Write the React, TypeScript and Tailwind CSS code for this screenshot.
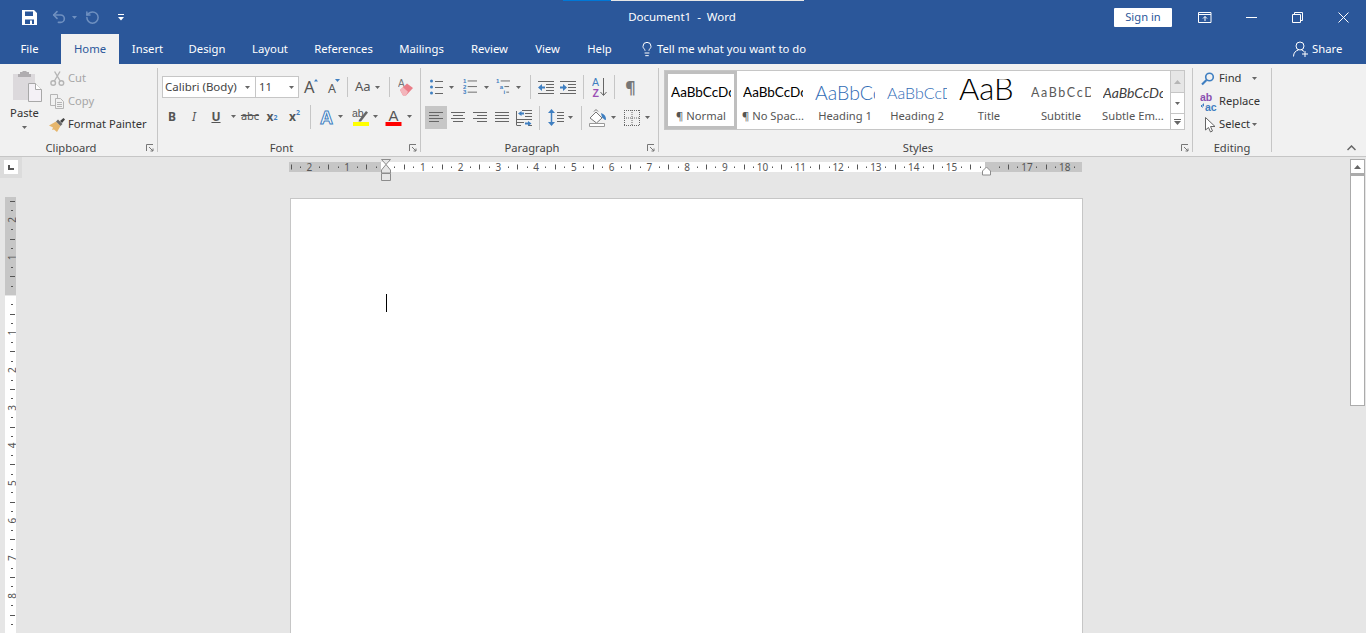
import React from "react";
import { Lightbulb, RotateCcw, Undo2 } from "lucide-react";

const Chev = ({ className = "", color = "#666" }: { className?: string; color?: string }) => (
  <svg width="5" height="3" viewBox="0 0 5 3" className={`shrink-0 ${className}`}>
    <path d="M0 0h5L2.5 3z" fill={color} />
  </svg>
);

const Sep = ({ className = "" }: { className?: string }) => <div className={`h-[24px] w-px shrink-0 bg-[#c6c6c6] ${className}`} />;

const Launcher = () => (
  <svg width="8" height="8" viewBox="0 0 8 8" fill="none" stroke="#777">
    <path d="M.5 7V.5H7" />
    <path d="M3 3l4 4M7 4.5V7H4.5" />
  </svg>
);

const Group = ({ w, label, launcher = true, className = "", children }: { w: string; label: string; launcher?: boolean; className?: string; children: React.ReactNode }) => (
  <div className={`flex shrink-0 ${w}`}>
    <div className="flex min-w-0 flex-1 flex-col">
      <div className={`min-h-0 flex-1 ${className}`}>{children}</div>
      <div className="flex h-[16px] items-center">
        <div className="flex-1 text-center leading-[16px] text-[#444]">{label}</div>
        {launcher && (
          <div className="flex w-[15px] justify-center">
            <Launcher />
          </div>
        )}
      </div>
    </div>
    <div className="my-[4px] w-px bg-[#c6c6c6]" />
  </div>
);

const Lines = ({ rows }: { rows: number[][] }) => (
  <>
    {rows.map(([x1, y, x2], i) => (
      <path key={i} d={`M${x1} ${y}.5H${x2}`} stroke="#666" />
    ))}
  </>
);

const AlignIcon = ({ rows }: { rows: number[][] }) => (
  <svg width="14" height="12" viewBox="0 0 14 12" fill="none">
    <Lines rows={rows} />
  </svg>
);

const Scissors = () => (
  <svg width="15" height="15" viewBox="0 0 15 15" fill="none" stroke="#b5b5b5" strokeWidth="1.4">
    <circle cx="3.2" cy="12" r="2.3" />
    <circle cx="11.4" cy="12" r="2.3" />
    <path d="M4.4 10L10 .5M10.2 10L4.6.5" />
  </svg>
);

const CopyIcon = () => (
  <svg width="15" height="15" viewBox="0 0 15 15" fill="#f1f1f1" stroke="#b5b5b5">
    <path d="M.5.5h7v11h-7z" />
    <path d="M5.5 4.5h5l3 3v7h-8z" />
    <path d="M7 8.5h5M7 10.5h5M7 12.5h5" />
  </svg>
);

const Brush = () => (
  <svg width="17" height="14" viewBox="0 0 17 14">
    <path d="M0 7.5l7-4 4.5 4.5-3.5 6-3-2.5-2 .5 1-2.500z" fill="#e6b66c" />
    <path d="M7 3.500l2-2 4.500 4.500-2 2z" fill="#6b6b6b" />
    <path d="M11 3l3.500-3 1.500 1.500-3 3.500z" fill="#444" />
  </svg>
);

const Paste = () => (
  <svg width="29" height="31" viewBox="0 0 29 31">
    <path d="M0 3h22v26H0z" fill="#dcd9dc" />
    <path d="M7 1h2l1-1h3l1 1h2v2h2v3H5V3h2z" fill="#b0adb0" />
    <path d="M15.500 12.500h7l6 6v12h-13z" fill="#f4f1f6" stroke="#a8a8a8" />
    <path d="M22.500 12.500v6h6" fill="#fff" stroke="#a8a8a8" />
  </svg>
);

const Eraser = () => (
  <svg width="16" height="19" viewBox="0 0 16 19">
    <text x="0" y="9" fontSize="10" fontFamily="'Liberation Sans',sans-serif" fill="#777">A</text>
    <path d="M2 12l7-6.500 6 4.500-7 7.500H5z" fill="#ea7d88" />
    <path d="M2 12l3-2.800 5 4.500-2 3.800H5z" fill="#f3b5bb" />
  </svg>
);

const TextEffect = () => (
  <svg width="17" height="18" viewBox="0 0 17 18">
    <text x="8.500" y="15.500" textAnchor="middle" fontSize="18" fontWeight="700" fontFamily="'Liberation Sans',sans-serif" fill="#fff" stroke="#3f7fc1" strokeWidth="1">A</text>
  </svg>
);

const Highlight = () => (
  <svg width="17" height="18" viewBox="0 0 17 18">
    <text x="0" y="9" fontSize="10.500" fontFamily="'Liberation Sans',sans-serif" fill="#555">ab</text>
    <path d="M7 12l7-9 2 1.500-7 9-2.500 0z" fill="#666" />
    <path d="M1 14h16v4H1z" fill="#ffff00" />
  </svg>
);

const FontColor = () => (
  <svg width="17" height="18" viewBox="0 0 17 18">
    <text x="8.500" y="12.500" textAnchor="middle" fontSize="15" fontFamily="'Liberation Sans',sans-serif" fill="#555">A</text>
    <path d="M.5 14h16v4H.5z" fill="#f00" />
  </svg>
);

const Bullets = () => (
  <svg width="14" height="16" viewBox="0 0 14 16" fill="none">
    <circle cx="1.500" cy="2" r="1.500" fill="#3f7fc1" />
    <circle cx="1.500" cy="8" r="1.500" fill="#3f7fc1" />
    <circle cx="1.500" cy="14" r="1.500" fill="#3f7fc1" />
    <Lines rows={[[5, 2, 13], [5, 8, 13], [5, 14, 13]]} />
  </svg>
);

const NumText = ({ x, y, t, s = 6.500 }: { x: number; y: number; t: string; s?: number }) => (
  <text x={x} y={y} fontSize={s} fontWeight="700" fontFamily="'Liberation Sans',sans-serif" fill="#3f7fc1">{t}</text>
);

const Numbering = () => (
  <svg width="15" height="19" viewBox="0 0 15 19" fill="none">
    <NumText x={0} y={5} t="1" />
    <NumText x={0} y={11} t="2" />
    <NumText x={0} y={17} t="3" />
    <Lines rows={[[5, 2, 15], [5, 8, 15], [5, 14, 15]]} />
  </svg>
);

const Multi = () => (
  <svg width="15" height="19" viewBox="0 0 15 19" fill="none">
    <NumText x={0} y={5} t="1" />
    <NumText x={4} y={11} t="a" />
    <NumText x={8} y={17} t="i" />
    <path d="M5 2.500h10M9 8.500h5M11 14.500h3" stroke="#666" />
  </svg>
);

const IndentIcon = ({ dir }: { dir: "dec" | "inc" }) => (
  <svg width="16" height="13" viewBox="0 0 16 13" fill="none">
    <Lines rows={[[0, 0, 16], [8, 3, 16], [8, 6, 16], [8, 9, 16], [0, 12, 16]]} />
    {dir === "dec" ? <path d="M0 6.500l4-3.500v2.500h3v2H4v2.500z" fill="#3f7fc1" /> : <path d="M7 6.500l-4-3.500v2.500H0v2h3v2.500z" fill="#3f7fc1" />}
  </svg>
);

const SortIcon = () => (
  <svg width="15" height="20" viewBox="0 0 15 20" fill="none">
    <text x="0" y="9" fontSize="10.500" fontFamily="'Liberation Sans',sans-serif" fill="#3f7fc1">A</text>
    <text x="0.500" y="19.500" fontSize="10.500" fontWeight="700" fontFamily="'Liberation Sans',sans-serif" fill="#9b4fb5">Z</text>
    <path d="M11.500 1v17M8.500 15l3 3.500 3-3.500" stroke="#666" />
  </svg>
);

const Distribute = () => (
  <svg width="16" height="16" viewBox="0 0 16 16" fill="none">
    <path d="M.5 1v14M.5 15.500H5M6 .5h10M9 3.500h7M9 6.500h7M1 9.500h15M1 12.500h7M12 15.500h4" stroke="#666" />
    <path d="M2 3.500l3.500-2.500v1.500H8v2H5.500V6zM15.500 13.500L12 11v1.500H9v2h3V16z" fill="#3f7fc1" />
  </svg>
);

const LineSpacing = () => (
  <svg width="16" height="17" viewBox="0 0 16 17" fill="none">
    <path d="M3.500 2v13" stroke="#3f7fc1" strokeWidth="1.500" />
    <path d="M0 4l3.500-4L7 4zM0 13l3.500 4L7 13z" fill="#3f7fc1" />
    <Lines rows={[[9, 3, 16], [9, 6, 16], [9, 9, 16], [9, 12, 16]]} />
  </svg>
);

const Shading = () => (
  <svg width="18" height="18" viewBox="0 0 18 18" fill="none">
    <path d="M1 9l6-6 6 6-5.500 5z" fill="#fff" stroke="#777" />
    <path d="M5 2.500L7 .5l2 2" stroke="#777" />
    <path d="M12 4c3 1 5 3 5 6 0 1-1 1.500-1.500 .5L13 8.500z" fill="#3f7fc1" />
    <path d="M.5 14.500h15v3H.5z" fill="#fff" stroke="#999" />
  </svg>
);

const BordersIcon = () => (
  <svg width="16" height="16" viewBox="0 0 16 16" fill="none" stroke="#666" strokeDasharray="1 1">
    <path d="M.5 0v16M8 0v16M15.500 0v16M0 .5h16M0 8h16M0 15.500h16" />
  </svg>
);

const FindIcon = () => (
  <svg width="14" height="14" viewBox="0 0 14 14" fill="none">
    <circle cx="8.500" cy="5" r="3.800" stroke="#3f7fc1" strokeWidth="1.600" />
    <path d="M5.500 8L1 12.500" stroke="#3f7fc1" strokeWidth="2.200" />
  </svg>
);

const ReplaceIcon = () => (
  <svg width="18" height="18" viewBox="0 0 18 18" fill="none">
    <text x="0" y="8" fontSize="10.500" fontWeight="700" fontFamily="'Liberation Sans',sans-serif" fill="#8a4fb0">ab</text>
    <text x="5" y="17.500" fontSize="10.500" fontWeight="700" fontFamily="'Liberation Sans',sans-serif" fill="#3f7fc1">ac</text>
    <path d="M3.500 10.500v2.500H1M1 13l1.500-1.500M1 13l1.500 1.500" stroke="#3f7fc1" />
  </svg>
);

const SelectIcon = () => (
  <svg width="11" height="16" viewBox="0 0 11 16" fill="#fff" stroke="#666">
    <path d="M.5.500v12.500l3-2.500 2 4.500 2-1-2-4.500h4.500z" />
  </svg>
);

const HRuler = () => {
  const o = 96;
  const s = 37.76;
  const marks: React.ReactNode[] = [];
  for (let i = -3; i <= 19; i++) {
    const x = o + i * s;
    const n = Math.abs(i);
    if (i !== 0 && i !== 16 && x > 2 && x < 790) {
      marks.push(
        <text key={`n${i}`} x={x} y={14} textAnchor="middle" fontSize="10" fontFamily="'Noto Sans',sans-serif" fill="#555">
          {n}
        </text>
      );
    }
    [0.25, 0.5, 0.75].forEach((f) => {
      const t = Math.round(x + f * s) + 0.5;
      if (t > 0 && t < 790 && Math.abs(t - o) > 6) {
        marks.push(f === 0.5 ? <path key={`m${i}${f}`} d={`M${t} 7.500v5`} stroke="#555" /> : <path key={`m${i}${f}`} d={`M${t} 9.500v1.500`} stroke="#555" />);
      }
    });
  }
  return (
    <svg width="796" height="24" viewBox="0 0 796 24" className="block">
      <rect x="0" y="5" width="793" height="10" fill="#c6c6c6" />
      <rect x="92" y="5" width="604" height="10" fill="#fff" />
      {marks}
      <path d="M92.500 2.500h9l-4.500 5 4.500 5.500v3h-9v-3L97 7.500z" fill="#e6e6e6" stroke="#8c8c8c" />
      <path d="M92.500 16.500h9v7h-9z" fill="#e6e6e6" stroke="#8c8c8c" />
      <path d="M693.500 14l4-4 4 4v4h-8z" fill="#fff" stroke="#8c8c8c" />
    </svg>
  );
};

const VRuler = () => {
  const o = 98;
  const s = 37.6;
  const marks: React.ReactNode[] = [];
  for (let i = -3; i <= 9; i++) {
    const y = o + i * s;
    const n = Math.abs(i);
    if (i !== 0 && y > 2 && y < 430) {
      marks.push(
        <text key={`n${i}`} x={7} y={y} textAnchor="middle" dominantBaseline="central" transform={`rotate(-90 7 ${y})`} fontSize="10" fontFamily="'Noto Sans',sans-serif" fill="#555">
          {n}
        </text>
      );
    }
    [0.25, 0.5, 0.75].forEach((f) => {
      const t = Math.round(y + f * s) + 0.5;
      if (t > 0 && t < 436) {
        marks.push(f === 0.5 ? <path key={`m${i}${f}`} d={`M5 ${t}h5`} stroke="#555" /> : <path key={`m${i}${f}`} d={`M6 ${t}h2`} stroke="#555" />);
      }
    });
  }
  return (
    <svg width="11" height="436" viewBox="0 0 11 436" className="block">
      <rect width="11" height="98" fill="#c6c6c6" />
      <rect y="99" width="11" height="337" fill="#fff" />
      {marks}
    </svg>
  );
};

const StyleItem = ({ preview, label, selected = false, previewClass }: { preview: string; label: string; selected?: boolean; previewClass: string }) => (
  <div className={`h-[58px] w-[72px] shrink-0 border-[3px] ${selected ? "border-[#bfbfbf]" : "border-transparent"}`}>
    <div className={`ml-[3px] mt-[5px] h-[25px] w-[60px] overflow-hidden whitespace-nowrap [font-family:Lato,sans-serif] ${previewClass}`}>{preview}</div>
    <div className="mt-[4px] truncate text-center leading-[16px] text-[#555]">{label}</div>
  </div>
);

const tabs = [
  ["Insert", "w-[57px]"],
  ["Design", "w-[62px]"],
  ["Layout", "w-[64px]"],
  ["References", "w-[83px]"],
  ["Mailings", "w-[73px]"],
  ["Review", "w-[63px]"],
  ["View", "w-[53px]"],
  ["Help", "w-[51px]"],
];

const PlainI = ({ w, className = "", children }: { w: string; className?: string; children: React.ReactNode }) => (
  <div className={`flex shrink-0 items-center justify-center ${w} ${className}`}>{children}</div>
);

export default function App() {
  return (
    <div className="relative flex h-[633px] w-[1366px] flex-col overflow-hidden bg-[#e6e6e6] text-[11.2px] [font-family:'Noto_Sans',sans-serif]">
      <div className="absolute left-[563px] top-0 h-px w-[48px] bg-[#0078d7]" />
      <div className="absolute left-[611px] top-0 h-px w-[193px] bg-[#e6e6e6]" />

      {/* Title bar */}
      <div className="flex h-[34px] shrink-0 items-center bg-[#2b579a] text-white">
        <div className="flex w-[564px] items-center">
          <svg width="15" height="15" viewBox="0 0 15 15" className="ml-[22px] shrink-0">
            <path fillRule="evenodd" d="M0 0h12l3 3v12H0zM3 1.500v4.500h8V1.500zM3 9.500v4.500h9V9.500z" fill="#fff" />
            <path d="M8 10.500h2v3.500H8z" fill="#fff" />
          </svg>
          <Undo2 size={16} strokeWidth={2.4} color="#6f90c0" className="ml-[14px] shrink-0" />
          <Chev color="#6f90c0" className="ml-[5px]" />
          <RotateCcw size={15} strokeWidth={2.4} color="#6f90c0" className="ml-[8px] shrink-0" />
          <svg width="7" height="7" viewBox="0 0 7 7" className="ml-[18px] shrink-0">
            <path d="M0 0h6v1H0zM0 3h6L3 6.500z" fill="#fff" />
          </svg>
        </div>
        <div className="w-[236px] text-center text-[11.5px] text-[#fff]">Document1 &nbsp;-&nbsp; Word</div>
        <div className="flex flex-1 items-center">
          <div className="ml-[314px] flex h-[19px] w-[58px] items-center justify-center rounded-[1px] bg-white text-[#2b579a]">Sign in</div>
          <svg width="14" height="11" viewBox="0 0 14 11" fill="none" stroke="#fff" className="ml-[26px] shrink-0">
            <path d="M.5.5h12.500v10H.5zM.5 2.500h12.500" />
            <path d="M7 9V4.500M5 6.500l2-2 2 2" />
          </svg>
          <div className="ml-[34px] h-px w-[11px] shrink-0 bg-white" />
          <svg width="11" height="11" viewBox="0 0 11 11" fill="none" stroke="#fff" className="ml-[35px] shrink-0">
            <path d="M.5 2.500h8v8h-8zM2.500 2.500v-2h8v8h-2" />
          </svg>
          <svg width="11" height="11" viewBox="0 0 11 11" fill="none" stroke="#fff" className="ml-[35px] shrink-0">
            <path d="M.5.500l10 10M10.500.500l-10 10" />
          </svg>
        </div>
      </div>

      {/* Tabs */}
      <div className="flex h-[30px] shrink-0 items-stretch bg-[#2b579a] text-[11.3px] text-white">
        <div className="flex w-[59px] items-center justify-center">File</div>
        <div className="ml-[2px] flex w-[58px] items-center justify-center bg-[#f1f1f1] text-[#2b579a]">Home</div>
        {tabs.map(([t, w]) => (
          <div key={t} className={`flex items-center justify-center ${w}`}>
            {t}
          </div>
        ))}
        <div className="ml-[14px] flex items-center">
          <Lightbulb size={16} strokeWidth={1.5} color="#fff" />
          <span className="ml-[2px]">Tell me what you want to do</span>
        </div>
        <div className="ml-[487px] flex items-center">
          <svg width="16" height="16" viewBox="0 0 16 16" fill="none" stroke="#fff">
            <circle cx="7" cy="5" r="4" />
            <path d="M.5 15.500c0-4 2.500-6 5-6.500M8.500 9c1 .3 2 .8 2.500 1.500M12 10v6M9 13h6" />
          </svg>
          <span className="ml-[3px]">Share</span>
        </div>
      </div>

      {/* Ribbon */}
      <div className="flex h-[93px] shrink-0 border-b border-[#c6c6c6] bg-[#f1f1f1] text-[#444]">
        <Group w="w-[158px]" label="Clipboard" className="flex">
          <div className="flex w-[49px] shrink-0 flex-col items-center pt-[7px]">
            <div className="ml-[5px]">
              <Paste />
            </div>
            <div className="mt-[3px] leading-[16px] text-[#333]">Paste</div>
            <Chev className="mt-[5px]" />
          </div>
          <div className="flex flex-col pt-[3px]">
            <div className="flex h-[23px] items-center text-[#a6a6a6]">
              <div className="w-[19px] pl-px">
                <Scissors />
              </div>
              Cut
            </div>
            <div className="flex h-[23px] items-center text-[#a6a6a6]">
              <div className="w-[19px] pl-px">
                <CopyIcon />
              </div>
              Copy
            </div>
            <div className="flex h-[23px] items-center text-[#333]">
              <div className="w-[19px]">
                <Brush />
              </div>
              Format Painter
            </div>
          </div>
        </Group>

        <Group w="w-[263px]" label="Font" className="pt-[12px]">
          <div className="flex h-[22px] items-center pl-[4px]">
            <div className="flex h-[22px] w-[94px] shrink-0 items-center justify-between border border-[#c6c6c6] bg-white pl-[2px] pr-[5px] text-[11.5px] text-[#444]">
              Calibri (Body)
              <Chev />
            </div>
            <div className="-ml-px flex h-[22px] w-[44px] shrink-0 items-center justify-between border border-[#c6c6c6] bg-white pl-[3px] pr-[4px] text-[#444]">
              11
              <Chev />
            </div>
            <svg width="14" height="22" viewBox="0 0 14 22" className="ml-[5px] shrink-0" overflow="visible">
              <text x="0" y="16.500" fontSize="16.500" fontFamily="'Noto Sans',sans-serif" fill="#555">A</text>
              <path d="M10 5.500l2-2.500 2 2.500z" fill="#3f7fc1" />
            </svg>
            <svg width="12" height="22" viewBox="0 0 12 22" className="ml-[10px] shrink-0" overflow="visible">
              <text x="0" y="16.500" fontSize="12.500" fontFamily="'Noto Sans',sans-serif" fill="#555">A</text>
              <path d="M7 3h5L9.500 6z" fill="#3f7fc1" />
            </svg>
            <Sep className="ml-[7px] !h-[20px]" />
            <span className="ml-[7px] w-[15px] shrink-0 text-[13px] text-[#555]">Aa</span>
            <Chev className="ml-[5px]" />
            <Sep className="ml-[9px] !h-[20px]" />
            <div className="ml-[8px]">
              <Eraser />
            </div>
          </div>
          <div className="mt-[7px] flex h-[23px] items-center pl-[3px] text-[#555]">
            <PlainI w="w-[22px]" className="text-[12px] font-bold">B</PlainI>
            <PlainI w="w-[22px]" className="text-[12px] italic">I</PlainI>
            <PlainI w="w-[22px]" className="text-[12px] font-bold underline">U</PlainI>
            <PlainI w="w-[12px]"><Chev /></PlainI>
            <PlainI w="w-[22px]" className="text-[11px] line-through">abc</PlainI>
            <PlainI w="w-[22px]" className="text-[12px] font-bold">x<sub className="text-[7px] text-[#3f7fc1]">2</sub></PlainI>
            <PlainI w="w-[23px]" className="text-[12px] font-bold">x<sup className="text-[7px] text-[#3f7fc1]">2</sup></PlainI>
            <Sep className="ml-[4px]" />
            <PlainI w="w-[22px]" className="ml-[4px]"><TextEffect /></PlainI>
            <PlainI w="w-[6px]"><Chev /></PlainI>
            <PlainI w="w-[22px]" className="ml-[6px]"><Highlight /></PlainI>
            <PlainI w="w-[8px]"><Chev /></PlainI>
            <PlainI w="w-[24px]" className="ml-[2px]"><FontColor /></PlainI>
            <PlainI w="w-[8px]"><Chev /></PlainI>
          </div>
        </Group>

        <Group w="w-[238px]" label="Paragraph" className="pt-[12px]">
          <div className="flex h-[22px] items-center pl-[9px]">
            <PlainI w="w-[14px]"><Bullets /></PlainI>
            <Chev className="ml-[5px]" />
            <PlainI w="w-[14px]" className="ml-[9px]"><Numbering /></PlainI>
            <Chev className="ml-[7px]" />
            <PlainI w="w-[14px]" className="ml-[7px]"><Multi /></PlainI>
            <Chev className="ml-[6px]" />
            <Sep className="ml-[9px]" />
            <PlainI w="w-[16px]" className="ml-[7px]"><IndentIcon dir="dec" /></PlainI>
            <PlainI w="w-[16px]" className="ml-[6px]"><IndentIcon dir="inc" /></PlainI>
            <Sep className="ml-[7px]" />
            <PlainI w="w-[15px]" className="ml-[8px]"><SortIcon /></PlainI>
            <Sep className="ml-[7px]" />
            <PlainI w="w-[11px]" className="ml-[10px] text-[16px] font-bold leading-none text-[#777]">¶</PlainI>
          </div>
          <div className="mt-[8px] flex h-[23px] items-center pl-[4px]">
            <PlainI w="w-[22px]" className="h-[23px] bg-[#c6c6c6]"><AlignIcon rows={[[0, 0, 14], [0, 3, 10], [0, 6, 14], [0, 9, 10]]} /></PlainI>
            <PlainI w="w-[22px]"><AlignIcon rows={[[0, 0, 14], [2, 3, 12], [0, 6, 14], [2, 9, 12]]} /></PlainI>
            <PlainI w="w-[22px]"><AlignIcon rows={[[0, 0, 14], [4, 3, 14], [0, 6, 14], [4, 9, 14]]} /></PlainI>
            <PlainI w="w-[22px]"><AlignIcon rows={[[0, 0, 14], [0, 3, 14], [0, 6, 14], [0, 9, 14]]} /></PlainI>
            <PlainI w="w-[16px]" className="ml-[3px]"><Distribute /></PlainI>
            <Sep className="ml-[7px]" />
            <PlainI w="w-[16px]" className="ml-[8px]"><LineSpacing /></PlainI>
            <Chev className="ml-[4px]" />
            <Sep className="ml-[8px]" />
            <PlainI w="w-[18px]" className="ml-[7px]"><Shading /></PlainI>
            <Chev className="ml-[4px]" />
            <PlainI w="w-[16px]" className="ml-[8px]"><BordersIcon /></PlainI>
            <Chev className="ml-[5px]" />
          </div>
        </Group>

        <Group w="w-[534px]" label="Styles" className="flex pl-[5px] pt-[6px]">
          <div className="flex h-[60px] w-[507px] shrink-0 items-start border border-[#c6c6c6] bg-white pl-0">
            <StyleItem selected preview="AaBbCcDc" label="¶ Normal" previewClass="text-[13.5px] leading-[27px] text-black" />
            <StyleItem preview="AaBbCcDc" label="¶ No Spac..." previewClass="text-[13.5px] leading-[27px] text-black" />
            <StyleItem preview="AaBbCc" label="Heading 1" previewClass="text-[19.5px] font-light leading-[27px] text-[#2f6bb5]" />
            <StyleItem preview="AaBbCcD" label="Heading 2" previewClass="text-[16px] font-light leading-[27px] text-[#2f6bb5]" />
            <StyleItem preview="AaB" label="Title" previewClass="text-[31px] font-light leading-[19px] text-black" />
            <StyleItem preview="AaBbCcD" label="Subtitle" previewClass="text-[12.5px] leading-[27px] tracking-[1.6px] text-[#5a5a5a]" />
            <StyleItem preview="AaBbCcDc" label="Subtle Em..." previewClass="text-[14px] italic leading-[27px] text-[#404040]" />
          </div>
          <div className="flex h-[60px] w-[14px] shrink-0 flex-col">
            <div className="flex h-[23px] items-center justify-center border border-l-0 border-[#c6c6c6] bg-[#e6e6e6]">
              <svg width="7" height="4" viewBox="0 0 7 4"><path d="M0 4h7L3.500 0z" fill="#b5b5b5" /></svg>
            </div>
            <div className="flex h-[20px] items-center justify-center border-r border-[#c6c6c6] bg-white">
              <Chev />
            </div>
            <div className="flex h-[17px] flex-col items-center justify-center gap-[1px] border border-l-0 border-[#c6c6c6] bg-white">
              <div className="h-px w-[7px] bg-[#666]" />
              <svg width="7" height="4" viewBox="0 0 7 4"><path d="M0 0h7L3.500 4z" fill="#666" /></svg>
            </div>
          </div>
        </Group>

        <Group w="w-[79px]" label="Editing" launcher={false} className="pl-[8px] pt-[3px]">
          <div className="flex h-[23px] items-center text-[#333]">
            <div className="w-[18px]"><FindIcon /></div>
            Find
            <Chev className="ml-[10px]" />
          </div>
          <div className="flex h-[23px] items-center text-[#333]">
            <div className="-ml-[1px] w-[19px]"><ReplaceIcon /></div>
            Replace
          </div>
          <div className="flex h-[23px] items-center text-[#333]">
            <div className="w-[18px] pl-[4px]"><SelectIcon /></div>
            Select
            <Chev className="ml-[2px]" />
          </div>
        </Group>

        <div className="flex flex-1 items-end justify-end pb-[5px] pr-[10px]">
          <svg width="9" height="6" viewBox="0 0 9 6" fill="none" stroke="#666" strokeWidth="1.500">
            <path d="M.5 5L4.500 1l4 4" />
          </svg>
        </div>
      </div>

      {/* Document area */}
      <div className="flex min-h-0 flex-1">
        <div className="flex min-w-0 flex-1 flex-col">
          <div className="flex h-[40px] shrink-0 items-start">
            <div className="flex h-[21px] w-[22px] shrink-0 items-start bg-[#dcdcdc] pl-[4px] pt-[3px]">
              <div className="flex h-[14px] w-[14px] items-center justify-center bg-white">
                <svg width="6" height="5" viewBox="0 0 6 5"><path d="M0 0h2v3h4v2H0z" fill="#555" /></svg>
              </div>
            </div>
            <div className="ml-[267px] mt-[0px]">
              <HRuler />
            </div>
          </div>
          <div className="flex min-h-0 flex-1 items-start overflow-hidden">
            <div className="ml-[5px] w-[11px] shrink-0">
              <VRuler />
            </div>
            <div className="ml-[274px] mt-px h-[500px] w-[793px] shrink-0 border border-[#c6c6c6] bg-white pl-[95px] pt-[95px]">
              <div className="h-[18px] w-px bg-black" />
            </div>
          </div>
        </div>
        <div className="mr-px flex w-[15px] shrink-0 flex-col pt-[2px]">
          <div className="flex h-[15px] shrink-0 items-center justify-center border border-[#ababab] bg-white">
            <svg width="7" height="4" viewBox="0 0 7 4"><path d="M0 4h7L3.500 0z" fill="#666" /></svg>
          </div>
          <div className="h-[232px] shrink-0 border-x border-b border-t-2 border-[#ababab] bg-white" />
          <div className="flex-1 bg-[#e6e6e6]" />
        </div>
      </div>
    </div>
  );
}
